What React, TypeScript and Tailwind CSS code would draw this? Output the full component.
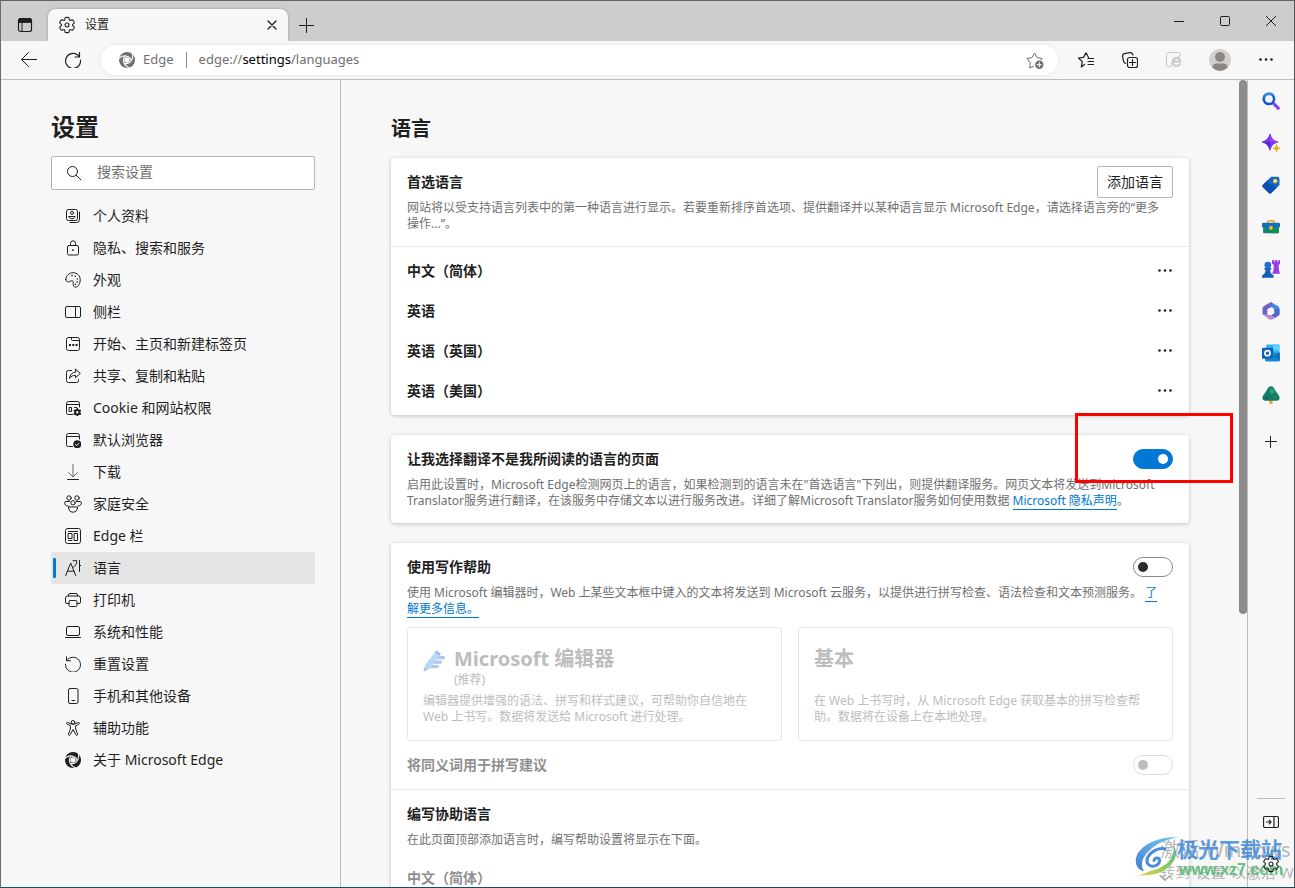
import type { ReactNode } from "react";

type IconProps = { children: ReactNode; size?: number; box?: number };

function Svg({ children, size = 16, box = 16 }: IconProps) {
  return (
    <svg
      width={size}
      height={size}
      viewBox={`0 0 ${box} ${box}`}
      fill="none"
      stroke="currentColor"
      strokeLinecap="round"
      strokeLinejoin="round"
      aria-hidden="true"
      className="shrink-0"
    >
      {children}
    </svg>
  );
}

function Gear({ size = 18 }: { size?: number }) {
  return (
    <Svg size={size} box={20}>
      <path
        strokeWidth="1.2"
        d="M1.91 7.38A8.5 8.5 0 0 1 3.7 4.3a.5.5 0 0 1 .54-.13l1.92.68a1 1 0 0 0 1.32-.76l.36-2a.5.5 0 0 1 .4-.4 8.53 8.53 0 0 1 3.55 0c.2.04.35.2.38.4l.37 2a1 1 0 0 0 1.32.76l1.92-.68a.5.5 0 0 1 .54.13 8.5 8.5 0 0 1 1.78 3.08c.06.2 0 .4-.15.54l-1.56 1.32a1 1 0 0 0 0 1.52l1.56 1.32a.5.5 0 0 1 .15.54 8.5 8.5 0 0 1-1.78 3.08.5.5 0 0 1-.54.13l-1.92-.68a1 1 0 0 0-1.32.76l-.37 2a.5.5 0 0 1-.38.4 8.53 8.53 0 0 1-3.56 0 .5.5 0 0 1-.39-.4l-.36-2a1 1 0 0 0-1.32-.76l-1.92.68a.5.5 0 0 1-.54-.13 8.5 8.5 0 0 1-1.78-3.08.5.5 0 0 1 .15-.54l1.56-1.32a1 1 0 0 0 0-1.52L2.06 7.92a.5.5 0 0 1-.15-.54Z"
      />
      <circle cx="10" cy="10" r="2.2" strokeWidth="1.2" />
    </Svg>
  );
}

function EdgeLogo({ gap }: { gap: string }) {
  const blade = "M-.3 6.500C2.200 4.300 5.600 3.400 8.600 4.400c1.600.5 2.800 1.600 3.200 3.200";
  return (
    <Svg>
      <circle cx="8" cy="8" r="8" fill="currentColor" stroke="none" />
      <g stroke={gap} strokeWidth="1.1">
        <path d={blade} />
        <path d={blade} transform="rotate(120 8 8)" />
        <path d={blade} transform="rotate(240 8 8)" />
      </g>
      <circle cx="8" cy="8" r="2.700" fill={gap} stroke="none" />
    </Svg>
  );
}

const icons: Record<string, ReactNode> = {
  profile: (
    <Svg>
      <rect x="1.5" y="1.500" width="11" height="11" rx="2" />
      <path d="M14.500 4v7.500a3 3 0 0 1-3 3H5" />
      <circle cx="7" cy="4.900" r="1.500" />
      <path d="M4 8.500h6c0 1.400-1.200 2.200-3 2.200s-3-.8-3-2.200Z" />
    </Svg>
  ),
  lock: (
    <Svg>
      <rect x="2.500" y="5.500" width="11" height="9.500" rx="1.500" />
      <path d="M5.500 5.500V3.300a2.500 2.500 0 0 1 5 0v2.200" />
      <circle cx="8" cy="10.200" r=".9" fill="currentColor" stroke="none" />
    </Svg>
  ),
  palette: (
    <Svg>
      <path d="M.8 7.300C1 3.500 4.300.7 8.100.7c4.100 0 7.100 3 7.100 6.900 0 4-1.900 7.500-4.300 7.500-2.100 0-3-1.700-2.700-3.600.3-1.900-.4-3.300-2.100-2.600-1.600.7-2.200 1.400-3.800.8C1.200 9.300.7 8.400.8 7.300Z" />
      <g fill="currentColor" stroke="none">
        <circle cx="7" cy="3.600" r=".8" />
        <circle cx="10.200" cy="4.300" r=".8" />
        <circle cx="12.300" cy="7" r=".8" />
        <circle cx="12.200" cy="10" r=".8" />
        <circle cx="10.400" cy="12.300" r=".8" />
      </g>
    </Svg>
  ),
  sidebar: (
    <Svg>
      <rect x=".5" y="2.500" width="15" height="11" rx="1.500" />
      <path d="M10.500 2.500v11" />
    </Svg>
  ),
  home: (
    <Svg>
      <rect x="1.500" y="1.500" width="13" height="13" rx="2" />
      <path d="M6.500 1.500v2a1 1 0 0 0 1 1h7" />
      <g fill="currentColor" stroke="none">
        <rect x="4" y="8" width="2" height="2" />
        <rect x="7.300" y="8" width="2" height="2" />
        <rect x="10.600" y="8" width="2" height="2" />
      </g>
    </Svg>
  ),
  share: (
    <Svg>
      <path d="M6.500 2.500h-3a2 2 0 0 0-2 2v8a2 2 0 0 0 2 2h8a2 2 0 0 0 2-2v-1" />
      <path d="M10.500 1.200 15.300 5.400l-4.800 4.300V7.300c-2.700 0-4.500 1-6 3.200.3-3.600 2.500-6.200 6-6.500Z" />
    </Svg>
  ),
  cookie: (
    <Svg>
      <path d="M7.500 14.500h-4a2 2 0 0 1-2-2v-9a2 2 0 0 1 2-2h9a2 2 0 0 1 2 2V7M1.500 4.500h13" />
      <path d="M4.500 7.500h2v4h-2zM9.500 7.500h2" />
      <circle cx="12.300" cy="12.300" r="2.200" strokeWidth="2" />
      <path
        d="M12.300 8.600v.6M12.300 15.400v.6M9.100 10.500l.6.3M14.900 13.800l.6.300M9.100 14.100l.6-.3M14.900 10.800l.6-.3"
        strokeWidth="1.500"
      />
    </Svg>
  ),
  browser: (
    <Svg>
      <path d="M7.500 14.500h-4a2 2 0 0 1-2-2v-9a2 2 0 0 1 2-2h9a2 2 0 0 1 2 2V7M1.500 4.500h13" />
      <circle cx="12.300" cy="12.200" r="4" fill="currentColor" stroke="none" />
      <path d="m10.400 12.400 1.300 1.200 2.400-2.500" stroke="#f7f7f7" />
    </Svg>
  ),
  download: (
    <Svg>
      <path d="M8 .5v12M3.500 8.500 8 13l4.500-4.500" stroke="#666666" />
      <path d="M2.500 15.500h11" />
    </Svg>
  ),
  family: (
    <Svg size={18} box={18}>
      <circle cx="5" cy="3" r="2.200" />
      <circle cx="13" cy="3" r="2.200" />
      <circle cx="9" cy="7.800" r="2.200" />
      <path d="M4.500 12h9c0 3.200-1.500 5.200-4.500 5.200S4.500 15.200 4.500 12ZM5.500 6.500H1.800C.1 6.500.4 8.800 1.300 9.900c.7.8 1.600 1.100 2.700 1.100M12.500 6.500h3.700c1.700 0 1.400 2.300.5 3.400-.7.8-1.600 1.100-2.700 1.100" />
    </Svg>
  ),
  edgebar: (
    <Svg>
      <rect x=".5" y=".5" width="15" height="15" rx="2" />
      <path d="M3.500 3.500h9M3.500 5.500H7v5H3.500zM9.500 5.500h3v7h-3zM3.500 12.500H7" />
    </Svg>
  ),
  language: (
    <Svg>
      <path d="M.7 15.500 5.700 3l5 12.500M2.400 11.200h6.600M8 .7h3.800c0 3-1.200 5.200-3.300 6.400M14.500.5v11M14.500 5.500h1.500" />
    </Svg>
  ),
  printer: (
    <Svg>
      <path d="M3.500 4V3a1.500 1.500 0 0 1 1.500-1.500h6A1.500 1.500 0 0 1 12.500 3v1M4 11.500H2a1.500 1.500 0 0 1-1.500-1.500V6A2 2 0 0 1 2.500 4h11a2 2 0 0 1 2 2v4a1.500 1.500 0 0 1-1.500 1.500h-2" />
      <rect x="4" y="8.500" width="8" height="6" rx="1.200" />
    </Svg>
  ),
  laptop: (
    <Svg>
      <rect x="1.500" y="2.500" width="13" height="9" rx="1.500" />
      <path d="M.5 13.500h15" />
    </Svg>
  ),
  reset: (
    <Svg>
      <path d="M1.500.8v4h4M1.700 4.600A7.500 7.500 0 1 1 .5 8.200" />
    </Svg>
  ),
  phone: (
    <Svg>
      <rect x="3.500" y=".5" width="9.500" height="15" rx="1.500" />
      <path d="M7 12.500h2.500" />
    </Svg>
  ),
  accessibility: (
    <Svg>
      <circle cx="8" cy="2.300" r="1.800" />
      <path d="M5.900 3.800 2.700 2.500c-1.300-.4-1.700 1.100-.6 1.700l3.300 1.600v3.300L3.400 14c-.4 1.300 1 2 1.700.8L8 9.600l2.900 5.200c.7 1.200 2.100.5 1.700-.8l-2-4.900V5.800l3.300-1.600c1.100-.6.7-2.100-.6-1.700l-3.200 1.300c-1.300.5-2.900.5-4.200 0Z" />
    </Svg>
  ),
  about: <EdgeLogo gap="#f7f7f7" />,
};

const navItems = [
  { icon: "profile", label: "个人资料" },
  { icon: "lock", label: "隐私、搜索和服务" },
  { icon: "palette", label: "外观" },
  { icon: "sidebar", label: "侧栏" },
  { icon: "home", label: "开始、主页和新建标签页" },
  { icon: "share", label: "共享、复制和粘贴" },
  { icon: "cookie", label: "Cookie 和网站权限" },
  { icon: "browser", label: "默认浏览器" },
  { icon: "download", label: "下载" },
  { icon: "family", label: "家庭安全" },
  { icon: "edgebar", label: "Edge 栏" },
  { icon: "language", label: "语言", active: true },
  { icon: "printer", label: "打印机" },
  { icon: "laptop", label: "系统和性能" },
  { icon: "reset", label: "重置设置" },
  { icon: "phone", label: "手机和其他设备" },
  { icon: "accessibility", label: "辅助功能" },
  { icon: "about", label: "关于 Microsoft Edge" },
];

function IconButton({ label, className, children }: { label: string; className: string; children: ReactNode }) {
  return (
    <button type="button" aria-label={label} className={`flex shrink-0 items-center justify-center ${className}`}>
      {children}
    </button>
  );
}

function TabStrip() {
  return (
    <div className="flex h-10 shrink-0 bg-[#cdcdcd]">
      <IconButton label="标签页操作菜单" className="w-[47px] pt-2">
        <Svg>
          <rect x="1.500" y="1.500" width="13" height="13" rx="2" strokeWidth="1.200" />
          <path d="M5 5v9.500" />
          <path d="M1.500 5V3.500a2 2 0 0 1 2-2h9a2 2 0 0 1 2 2V5Z" fill="currentColor" />
        </Svg>
      </IconButton>
      <div className="mt-2 flex w-60 items-center rounded-t-lg bg-[#f7f7f7] pl-[10px] pr-1 shadow-[0_0_3px_rgba(0,0,0,0.25)]">
        <Gear />
        <span className="ml-[9px] flex-1 text-xs">设置</span>
        <IconButton label="关闭标签页" className="size-6">
          <Svg size={10} box={10}>
            <path d="m1 1 8 8M9 1 1 9" strokeWidth="1.300" />
          </Svg>
        </IconButton>
      </div>
      <IconButton label="新建标签页" className="w-9 pt-2">
        <Svg>
          <path d="M8.500 1.500v14M1.500 8.500h14" />
        </Svg>
      </IconButton>
      <div className="ml-auto flex">
        <IconButton label="最小化" className="w-[46px]">
          <Svg size={10} box={10}>
            <path d="M0 5.500h10" />
          </Svg>
        </IconButton>
        <IconButton label="最大化" className="w-[46px]">
          <Svg size={10} box={10}>
            <rect x=".5" y=".5" width="9" height="9" rx="1" />
          </Svg>
        </IconButton>
        <IconButton label="关闭" className="w-[46px]">
          <Svg size={10} box={10}>
            <path d="m.3.300 9.400 9.400M9.700.3.300 9.700" />
          </Svg>
        </IconButton>
      </div>
    </div>
  );
}

function Toolbar() {
  return (
    <div className="z-10 flex h-[39px] shrink-0 items-center border-b border-[#bdbdbd] bg-[#f7f7f7] px-[6px]">
      <IconButton label="返回" className="w-11">
        <Svg>
          <path d="M16 7.500H.5M7.500.500l-7 7 7 7" />
        </Svg>
      </IconButton>
      <IconButton label="刷新" className="w-11">
        <Svg>
          <path d="M14.500.5V5H10M14.300 4.800A7.500 7.500 0 1 0 15.500 8" strokeWidth="1.200" />
        </Svg>
      </IconButton>
      <div className="mx-[6px] flex h-[30px] min-w-0 flex-1 items-center rounded-full bg-white pl-[18px] pr-[13px] text-[13px] text-[#707070] shadow-[0_0_4px_rgba(0,0,0,0.08)]">
        <EdgeLogo gap="#ffffff" />
        <span className="ml-2">Edge</span>
        <span className="mx-3 h-4 w-px bg-[#8a8a8a]" />
        <span className="flex-1">
          edge://<span className="text-black">settings</span>/languages
        </span>
        <IconButton label="将此页面添加到收藏夹" className="">
          <Svg size={20} box={20}>
            <path d="M8.500 16.200 4.700 18l.6-5.300L2 8.500l5-.9L9.600 3l2.500 4.600 5 .9-1.300 1.600" />
            <circle cx="14.300" cy="14.700" r="4.200" fill="currentColor" stroke="none" />
            <path d="M14.300 12.500v4.400M12.100 14.700h4.400" stroke="#ffffff" />
          </Svg>
        </IconButton>
      </div>
      <IconButton label="收藏夹" className="w-11">
        <Svg>
          <path d="M6.500 12.500 3.300 15l.9-5.300L.5 6l5-.6L8 .8l2.500 4.700M10 6.500h6M10 9.500h6M10 12.500h6" strokeWidth="1.200" />
        </Svg>
      </IconButton>
      <IconButton label="集锦" className="w-11">
        <Svg>
          <rect x="5.500" y="5.500" width="10" height="10" rx="2" strokeWidth="1.200" />
          <path
            d="M10.500 7.500v6M7.500 10.500h6M3.500 11.500C2.300 11 1.800 10 1.400 8.700L.6 4.600C.3 3 1 2 2.500 1.600L7.800.6C9.500.3 10.400 1 11 3"
            strokeWidth="1.200"
          />
        </Svg>
      </IconButton>
      <IconButton label="Internet Explorer 模式" className="w-11 text-[#c8c8c8]">
        <Svg>
          <path d="M4 14.500H2.500a2 2 0 0 1-2-2v-10a2 2 0 0 1 2-2h10a2 2 0 0 1 2 2" />
          <path
            d="M7 9.600h7.300c0-2.300-1.400-3.700-3.700-3.700S6.700 7.600 6.700 9.900s1.500 3.900 3.900 3.900c1.500 0 2.600-.6 3.300-1.700"
            strokeWidth="2"
          />
          <path d="M5 15.200C3.500 12.500 9.600 4.700 14.800 3.500" />
        </Svg>
      </IconButton>
      <IconButton label="个人资料" className="w-12">
        <Svg size={22} box={22}>
          <circle cx="11" cy="11" r="11" fill="#d3cfcc" stroke="none" />
          <circle cx="11" cy="8" r="5" fill="#8a8785" stroke="none" />
          <path d="M3.300 18.500c0-2.400 2-4 4.500-4h6.400c2.500 0 4.500 1.600 4.500 4a11 11 0 0 1-15.400 0Z" fill="#8a8785" stroke="none" />
        </Svg>
      </IconButton>
      <IconButton label="设置及其他" className="w-11">
        <Dots />
      </IconButton>
    </div>
  );
}

function Dots() {
  return (
    <Svg>
      <g fill="currentColor" stroke="none">
        <circle cx="2.500" cy="7.500" r="1.300" />
        <circle cx="8" cy="7.500" r="1.300" />
        <circle cx="13.500" cy="7.500" r="1.300" />
      </g>
    </Svg>
  );
}

function SettingsNav() {
  return (
    <aside className="w-[340px] shrink-0 overflow-hidden border-r border-[#bdbdbd] pl-[50px] pr-[25px] pt-[31px]">
      <h1 className="text-2xl font-bold leading-8">设置</h1>
      <label className="mt-[13px] flex h-[34px] items-center rounded-[2px] border border-[#b5b5b5] bg-white pl-[14px]">
        <Svg>
          <circle cx="6.500" cy="6.500" r="5" />
          <path d="m10.200 10.200 4.800 4.800" />
        </Svg>
        <input
          type="search"
          aria-label="搜索设置"
          placeholder="搜索设置"
          className="ml-[15px] min-w-0 flex-1 bg-transparent pb-[2px] text-sm outline-none placeholder:text-[#707070]"
        />
      </label>
      <nav className="mt-[10px] flex flex-col">
        {navItems.map((item) => (
          <a
            key={item.label}
            href="#"
            aria-current={item.active ? "page" : undefined}
            className={
              item.active
                ? "flex h-8 items-center rounded-[2px] bg-[#e5e5e5] pl-[2px] text-sm"
                : "flex h-8 items-center pl-[2px] text-sm"
            }
          >
            <span className={item.active ? "h-5 w-[3px] rounded-[1px] bg-[#0078d4]" : "h-5 w-[3px]"} />
            <span className="ml-2 flex w-[18px] justify-center">{icons[item.icon]}</span>
            <span className="ml-[11px]">{item.label}</span>
          </a>
        ))}
      </nav>
    </aside>
  );
}

function Toggle({ label, on = false, disabled = false }: { label: string; on?: boolean; disabled?: boolean }) {
  return (
    <input
      type="checkbox"
      role="switch"
      aria-label={label}
      defaultChecked={on}
      disabled={disabled}
      className="flex h-5 w-10 shrink-0 appearance-none items-center rounded-full border border-[#8a8a8a] bg-white px-1 before:size-[10px] before:rounded-full before:bg-[#2b2b2b] checked:justify-end checked:border-[#0078d4] checked:bg-[#0078d4] checked:before:bg-white disabled:border-[#dddddd] disabled:before:bg-[#bdbdbd]"
    />
  );
}

function Card({ children, className = "" }: { children: ReactNode; className?: string }) {
  return (
    <section className={`rounded-[4px] bg-white shadow-[0_1px_4px_rgba(0,0,0,0.22)] ${className}`}>{children}</section>
  );
}

function TitleRow({ title, muted = false, children }: { title: string; muted?: boolean; children?: ReactNode }) {
  return (
    <div className="flex h-8 items-center justify-between">
      <h3 className={muted ? "text-sm font-bold text-[#8f8f8f]" : "text-sm font-bold"}>{title}</h3>
      {children}
    </div>
  );
}

const linkClass = "border-b border-[#0078d4] text-[#0078d4]";

function PreferredLanguages() {
  const languages = ["中文（简体）", "英语", "英语（英国）", "英语（美国）"];
  return (
    <Card className="mt-[14px]">
      <div className="border-b border-[#e8e8e8] px-4 pb-[14px] pt-2">
        <TitleRow title="首选语言">
          <button type="button" className="h-8 rounded-[2px] border border-[#b5b5b5] bg-white px-[9px] text-sm">
            添加语言
          </button>
        </TitleRow>
        <p className="mt-[2px] pr-2 text-xs text-[#707070]">
          网站将以受支持语言列表中的第一种语言进行显示。若要重新排序首选项、提供翻译并以某种语言显示 Microsoft
          Edge，请选择语言旁的“更多操作...”。
        </p>
      </div>
      <ul className="px-4 py-1">
        {languages.map((name) => (
          <li key={name} className="flex h-10 items-center justify-between text-sm font-bold">
            {name}
            <IconButton label={`${name}：更多操作`} className="">
              <Dots />
            </IconButton>
          </li>
        ))}
      </ul>
    </Card>
  );
}

function TranslateCard() {
  return (
    <div className="relative mt-5">
      <Card className="px-4 pb-[14px] pt-2">
        <TitleRow title="让我选择翻译不是我所阅读的语言的页面">
          <Toggle label="让我选择翻译不是我所阅读的语言的页面" on />
        </TitleRow>
        <p className="mt-[2px] pr-2 text-xs text-[#707070]">
          启用此设置时，Microsoft Edge检测网页上的语言，如果检测到的语言未在"首选语言"下列出，则提供翻译服务。网页文本将发送到Microsoft
          Translator服务进行翻译，在该服务中存储文本以进行服务改进。详细了解Microsoft Translator服务如何使用数据{" "}
          <a href="#" className={linkClass}>
            Microsoft 隐私声明
          </a>
          。
        </p>
      </Card>
      <div className="pointer-events-none absolute -right-11 -top-[22px] h-[70px] w-[158px] border-3 border-[#ff0000]" />
    </div>
  );
}

function EditorGlyph() {
  return (
    <svg width="22" height="22" viewBox="0 0 22 22" aria-hidden="true" className="mt-1 shrink-0">
      <path
        d="M12 6h8.500a1.500 1.500 0 0 1 0 3.200H11zM9.500 10.500h8a1.500 1.500 0 0 1 0 3.200H8zM7 15h7.500a1.500 1.500 0 0 1 0 3.200H5z"
        fill="#b4c5ea"
      />
      <path d="M13.200.500 17.800 3.800 7.300 18.500.500 21.500l2-7.100Z" fill="#b9daf5" />
      <path d="M13.200.500 17.800 3.800l-1.500 2.100-4.600-3.300ZM.500 21.500l1-3.800 2.600 2Z" fill="#9fbbe5" />
    </svg>
  );
}

function WritingCard() {
  return (
    <Card className="mt-5">
      <div className="border-b border-[#e8e8e8] px-4 py-2">
        <TitleRow title="使用写作帮助">
          <Toggle label="使用写作帮助" />
        </TitleRow>
        <p className="mt-[2px] pr-2 text-xs text-[#707070]">
          使用 Microsoft 编辑器时，Web 上某些文本框中键入的文本将发送到 Microsoft
          云服务，以提供进行拼写检查、语法检查和文本预测服务。{" "}
          <a href="#" className={linkClass}>
            了解更多信息。
          </a>
        </p>
        <div className="mt-[10px] grid grid-cols-2 gap-4 text-xs text-[#bdbdbd]">
          <div className="rounded-[4px] border border-[#e6e6e6] px-[15px] pb-[15px] pt-[18px]">
            <div className="flex h-[47px] gap-[9px]">
              <EditorGlyph />
              <div>
                <h4 className="text-xl font-bold leading-[26px]">Microsoft 编辑器</h4>
                <p>(推荐)</p>
              </div>
            </div>
            <p>编辑器提供增强的语法、拼写和样式建议，可帮助你自信地在 Web 上书写。数据将发送给 Microsoft 进行处理。</p>
          </div>
          <div className="rounded-[4px] border border-[#e6e6e6] px-[15px] pb-[15px] pt-[18px]">
            <div className="h-[47px]">
              <h4 className="text-xl font-bold leading-[26px]">基本</h4>
            </div>
            <p>在 Web 上书写时，从 Microsoft Edge 获取基本的拼写检查帮助。数据将在设备上在本地处理。</p>
          </div>
        </div>
        <div className="mt-2">
          <TitleRow title="将同义词用于拼写建议" muted>
            <Toggle label="将同义词用于拼写建议" disabled />
          </TitleRow>
        </div>
      </div>
      <div className="px-4 pt-2">
        <TitleRow title="编写协助语言" />
        <p className="mt-[2px] text-xs text-[#707070]">在此页面顶部添加语言时，编写帮助设置将显示在下面。</p>
        <div className="mt-[10px] flex h-10 items-center justify-between text-sm font-bold text-[#8f8f8f]">
          中文（简体）
          <IconButton label="展开" className="w-4 text-[#5a5a5a]">
            <Svg size={12} box={12}>
              <path d="m1 3.500 5 5 5-5" />
            </Svg>
          </IconButton>
        </div>
      </div>
    </Card>
  );
}

const apps: { label: string; art: ReactNode }[] = [
  {
    label: "搜索",
    art: (
      <>
        <path d="m11.300 11.300 4 4" stroke="#8b3ff0" strokeWidth="3" />
        <circle cx="6.500" cy="6.500" r="4.900" stroke="#0f55d6" strokeWidth="2.400" />
        <path d="M2.400 4A4.900 4.900 0 0 1 9.200 2.400" stroke="#2f8ce8" strokeWidth="2.400" />
      </>
    ),
  },
  {
    label: "发现",
    art: (
      <g stroke="none">
        <path
          d="M7.500 0c1.200 4.600 2.900 6.300 7.500 7.500-4.600 1.200-6.300 2.900-7.500 7.500C6.300 10.400 4.600 8.700 0 7.500 4.600 6.300 6.300 4.600 7.500 0Z"
          fill="#7a35e8"
          stroke="#7a35e8"
          strokeWidth="1"
        />
        <path d="M7.500 7.500H0C4.600 8.700 6.300 10.400 7.500 15Z" fill="#4a2bd0" />
        <path d="M7.500 0v7.500H15C10.400 6.300 8.700 4.600 7.500 0Z" fill="#a33cf4" />
        <path
          d="M13.700 10.200c.4 2.300 1 2.900 3.300 3.300-2.300.4-2.900 1-3.300 3.300-.4-2.300-1-2.900-3.300-3.300 2.300-.4 2.900-1 3.300-3.300Z"
          fill="#f2a900"
          stroke="#f2a900"
          strokeWidth=".8"
        />
      </g>
    ),
  },
  {
    label: "购物",
    art: (
      <g stroke="none">
        <path
          d="M8.600.8h5.900a2 2 0 0 1 2 2v5.700L8.800 16c-.8.700-1.700.7-2.400 0L.9 10.600c-.7-.7-.7-1.600 0-2.400Z"
          fill="#1268c8"
        />
        <path d="M.9 8.200 4.400 5l9.500 6L8.800 16c-.8.700-1.700.7-2.400 0L.9 10.600c-.7-.7-.7-1.600 0-2.400Z" fill="#0c51b5" />
        <circle cx="12.500" cy="4.800" r="1.700" fill="#fff3b0" stroke="#f5bd16" strokeWidth="1" />
      </g>
    ),
  },
  {
    label: "工具",
    art: (
      <g stroke="none">
        <path
          d="M5.500 5V3.800c0-.7.500-1.200 1.200-1.200h3.600c.7 0 1.200.5 1.200 1.200V5"
          fill="none"
          stroke="#e9a11c"
          strokeWidth="1.500"
        />
        <rect x="1" y="8" width="15" height="6.500" rx="1.300" fill="#138577" />
        <path d="M9 8h7v5.200c0 .7-.6 1.300-1.300 1.300H9z" fill="#178a55" />
        <rect x="0" y="4.500" width="17" height="4.600" rx="1.100" fill="#1670b8" />
        <rect x="7" y="7.500" width="3" height="3.500" rx=".8" fill="#f7bd25" />
      </g>
    ),
  },
  {
    label: "游戏",
    art: (
      <g stroke="none">
        <path
          d="M9.500 0h1.800v1.400h1.300V0h1.800v1.400h1.300V0h1.300v3.500l-1.300 1.300.4 5 .9 3.200H9.500l1.200-2.500.5-5.700L9.500 3.500Z"
          fill="#9b3be8"
        />
        <circle cx="5.500" cy="4.800" r="3.200" fill="#1f6fd0" />
        <path
          d="M2.300 7.500h6.400v1.700h-1c0 2.300.6 3.600 2.300 4.700 1 .5 1.200 1.500 1 2.900H0c-.2-1.400 0-2.400 1-2.900 1.700-1.100 2.300-2.400 2.300-4.700h-1Z"
          fill="#1560bd"
        />
      </g>
    ),
  },
  {
    label: "Microsoft 365",
    art: (
      <g stroke="none">
        <path d="m8.500.2 6.100 3.400c1.100.6 1.900 1.500 1.900 2.800v4.100L11.600 8V6.600L8.500 4.800 5 7V2.300Z" fill="#3f8fe0" />
        <path d="M8.500.2 2.400 3.600C1.300 4.200.5 5.100.5 6.400v5.200L5 13.800V6.500l3.500-2 1.800-3Z" fill="#6b63c9" />
        <path d="m.5 11.400 6.200 4.900c1.200.6 2.400.6 3.600 0l4.300-2.600c1.100-.6 1.900-1.500 1.900-2.700V8.400l-5 2.400-3 1.700Z" fill="#b78bdd" />
        <path d="m16.500 6.500-4.900.1v4.200l-3 1.700 4 2.100 2-1.100c1.100-.6 1.900-1.500 1.900-2.700Z" fill="#4b69c8" />
        <circle cx="8.500" cy="8.500" r="2.900" fill="#f7f7f7" />
      </g>
    ),
  },
  {
    label: "Outlook",
    art: (
      <g stroke="none">
        <rect x="4" y=".5" width="12.500" height="10" rx="1" fill="#36b4ed" />
        <path d="M10.500.5h5a1 1 0 0 1 1 1V6h-6z" fill="#5fd0f7" />
        <path d="M3 8h13.800v7.500a1 1 0 0 1-1 1H4a1 1 0 0 1-1-1z" fill="#1689d8" />
        <path d="M16.800 8v7.500l-6-3.700Z" fill="#0f6cbd" />
        <rect x="0" y="3.500" width="10.500" height="10.500" rx="1" fill="#0f64b8" />
        <circle cx="5.200" cy="8.700" r="2.400" fill="none" stroke="#ffffff" strokeWidth="1.600" />
      </g>
    ),
  },
  {
    label: "植树",
    art: (
      <g stroke="none">
        <rect x="7" y="12" width="3" height="5" rx="1" fill="#efa51d" />
        <path
          d="M8.500.2c1.700 0 2.500 1.200 3.400 2.700l1.300 2.200c.7 1 1.200 1.500 1.900 2.600 2.600 3.500 1.700 6.200-1.400 6.200H3.300C.2 13.900-.7 11.200 1.900 7.700 2.600 6.600 3.100 6.100 3.800 5.100l1.300-2.200C6 1.400 6.800.2 8.500.2Z"
          fill="#157c66"
        />
        <circle cx="9.500" cy="4.800" r="2.500" fill="#29a07c" />
        <circle cx="4.500" cy="11" r="1.900" fill="#0f6a62" />
        <circle cx="11.800" cy="10.700" r="1.900" fill="#1b8a68" />
      </g>
    ),
  },
];

function AppRail() {
  return (
    <aside className="flex w-[46px] shrink-0 flex-col items-center">
      {apps.map((app) => (
        <IconButton key={app.label} label={app.label} className="h-[42px] w-full">
          <Svg size={18} box={17}>
            {app.art}
          </Svg>
        </IconButton>
      ))}
      <IconButton label="自定义" className="mt-[5px] h-[42px] w-full">
        <Svg size={12} box={12}>
          <path d="M5.500.5v11M.5 5.500h11" />
        </Svg>
      </IconButton>
      <div className="mb-[2px] mt-auto w-7 border-t border-[#bdbdbd]" />
      <IconButton label="隐藏侧栏" className="h-[42px] w-full">
        <Svg>
          <rect x=".5" y="2.500" width="15" height="11" rx="1.500" strokeWidth="1.200" />
          <path d="M11 2.500v11M3.500 8H8M6.300 6.200 8 8l-1.700 1.800" strokeWidth="1.200" />
        </Svg>
      </IconButton>
      <IconButton label="侧栏设置" className="z-10 mb-[2px] h-[42px] w-full">
        <Gear />
      </IconButton>
    </aside>
  );
}

function Watermarks() {
  return (
    <div className="pointer-events-none absolute bottom-0 right-0 h-[52px] w-[160px] overflow-hidden whitespace-nowrap">
      <div className="absolute left-[26px] top-[3px] text-[#9a9a9a]/70">
        <p className="text-xl leading-6">激活 Windows</p>
        <p className="text-[15px] leading-5">转到“设置”以激活 Windows。</p>
      </div>
      <svg width="46" height="42" viewBox="0 0 46 42" fill="none" className="absolute left-0 top-px opacity-90" aria-hidden="true">
        <defs>
          <linearGradient id="swirlBlue" x1="0" y1="1" x2="1" y2="0">
            <stop offset="0" stopColor="#2f6fd0" />
            <stop offset="1" stopColor="#6cc9f2" />
          </linearGradient>
          <linearGradient id="swirlGreen" x1="0" y1="1" x2="1" y2="0">
            <stop offset="0" stopColor="#e8d23c" />
            <stop offset=".5" stopColor="#7cc84a" />
            <stop offset="1" stopColor="#4fae8c" />
          </linearGradient>
        </defs>
        <path d="M45 1C29 0 11 6 4 17c-5 9-1 17 6 18C6 29 8 21 16 14 23 7 34 3 45 1Z" fill="url(#swirlBlue)" />
        <path
          d="M31 13c-7-2-17 4-18 11-.6 5 5 8 10 5 3.500-2.500 3.500-6.500.5-7-2-.3-3.500 1-3.500 2.500"
          stroke="#3b7fd6"
          strokeWidth="3"
          strokeLinecap="round"
        />
        <path d="M40 10c5 9 0 19-11 25-7 4-16 4.500-25 4.500 7-2 10-4.500 16-5.500 12-3 20-11 20-24Z" fill="url(#swirlGreen)" />
      </svg>
      <p className="absolute left-[43px] top-[2px] text-[21px] font-bold leading-6 text-[#3f8ad8]/85">极光下载站</p>
      <p className="absolute left-[45px] top-[25px] font-['Liberation_Sans',sans-serif] text-base font-bold leading-5 text-[#4cb86c]/85">
        www.xz7.com
      </p>
    </div>
  );
}

export default function App() {
  return (
    <div
      lang="zh-CN"
      className="relative flex h-screen flex-col overflow-hidden border border-b-[#1b4a66] border-l-[#6b6b6b] border-r-[#4f5560] border-t-[#666364] bg-[#f7f7f7] font-['Noto_Sans','Noto_Sans_CJK_SC',sans-serif] text-[#1f1f1f]"
    >
      <TabStrip />
      <Toolbar />
      <div className="flex min-h-0 flex-1">
        <SettingsNav />
        <main className="min-w-0 flex-1 overflow-hidden px-[50px] pt-[33px]">
          <h2 className="text-xl font-bold leading-[31px]">语言</h2>
          <PreferredLanguages />
          <TranslateCard />
          <WritingCard />
        </main>
        <div className="w-[9px] shrink-0 border-r border-[#bdbdbd]">
          <div className="h-[534px] rounded-full bg-[#8c8c8c]" />
        </div>
        <AppRail />
      </div>
      <Watermarks />
    </div>
  );
}
